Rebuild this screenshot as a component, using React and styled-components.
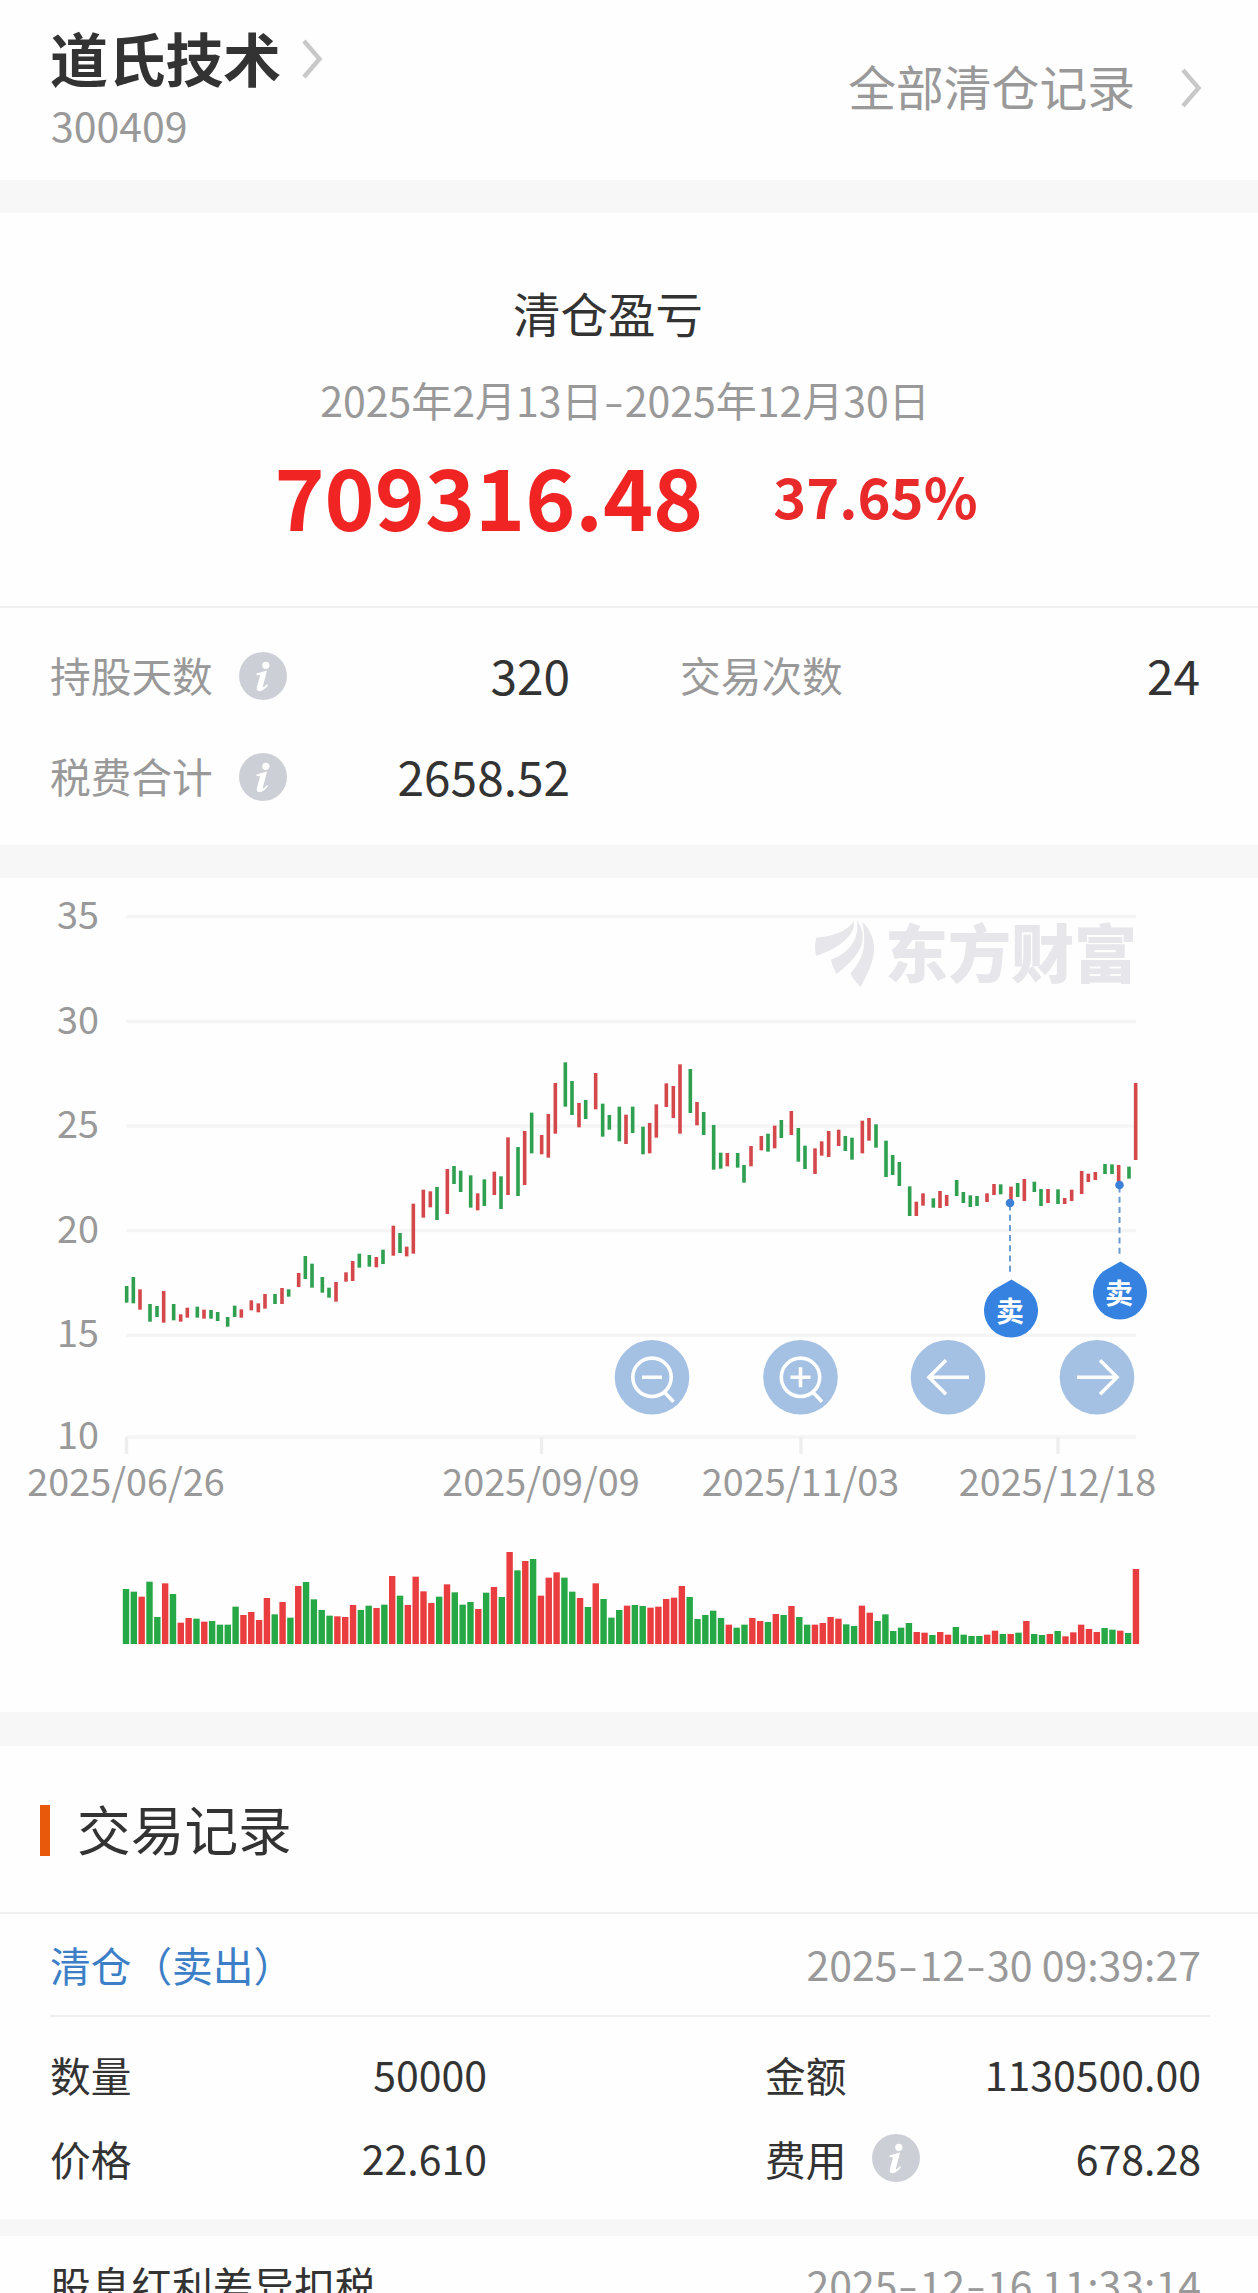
import React from "react";
import styled, { createGlobalStyle } from "styled-components";

const FONT = '"Noto Sans CJK SC", "Noto Sans", sans-serif';

const GlobalStyle = createGlobalStyle`
  * { box-sizing: border-box; }
  body { margin: 0; background: #fefefe; font-family: ${FONT}; }
`;

const Page = styled.main`
  width: 1258px;
  height: 2293px;
  overflow: hidden;
  display: flex;
  flex-direction: column;
  background: #fefefe;
  color: #333;
  font-family: ${FONT};
`;

const Divider = styled.div`
  flex: none;
  height: ${(p) => p.$h}px;
  background: #f7f7f7;
`;

const Header = styled.header`
  flex: none;
  height: 180px;
  padding: 22px 56px 0 50px;
  display: flex;
  justify-content: space-between;
`;

const Stock = styled.div`
  display: flex;
  flex-direction: column;
  gap: 7px;
`;

const StockName = styled.h1`
  margin: 0;
  display: flex;
  align-items: center;
  gap: 21px;
  font-size: 58px;
  line-height: 70px;
  font-weight: 700;
  letter-spacing: -0.3px;
`;

const StockCode = styled.span`
  padding-left: 1px;
  color: #999;
  font-size: 41px;
  line-height: 50px;
`;

const AllRecords = styled.a`
  display: flex;
  align-items: center;
  gap: 46px;
  height: 64px;
  margin-top: 32px;
  color: #999;
  font-size: 47.8px;
  line-height: 64px;
`;

const Summary = styled.section`
  flex: none;
  height: 395px;
  padding-top: 65px;
  display: flex;
  flex-direction: column;
  align-items: center;
  border-bottom: 2px solid #f0f0f0;
`;

const SummaryTitle = styled.h2`
  margin: 0;
  padding-right: 42px;
  font-size: 47.5px;
  line-height: 70px;
  font-weight: 400;
`;

const Period = styled.p`
  margin: 21px 8px 0 0;
  color: #999;
  font-size: 41px;
  line-height: 60px;
`;

const Hyphen = styled.span`
  display: inline-block;
  width: 22px;
  text-align: center;
  transform: scaleX(1.4);
`;

const Result = styled.div`
  display: flex;
  align-items: center;
  gap: 70px;
  margin-top: 13px;
  padding-right: 6px;
  color: #f12424;
  font-weight: 700;
`;

const Amount = styled.span`
  font-size: 85px;
  line-height: 100px;
`;

const Percent = styled.span`
  font-size: 56px;
  line-height: 100px;
  padding-top: 3px;
  color: #e92a2a;
`;

const Stats = styled.section`
  flex: none;
  height: 237px;
  padding: 17px 58px 0 50px;
  display: grid;
  grid-template-columns: 520px 520px;
  grid-auto-rows: 101px;
  column-gap: 110px;
`;

const Field = styled.div`
  display: flex;
  align-items: center;
  gap: 26px;
`;

const FieldName = styled.span`
  font-size: 40.7px;
  line-height: 60px;
  margin-top: ${(p) => (p.$dark ? 1 : -1)}px;
  color: ${(p) => (p.$dark ? "#333" : "#999")};
`;

const FieldValue = styled.span`
  margin: -2px 0 0 auto;
  font-size: ${(p) => p.$size}px;
  line-height: 60px;
`;

const ChartSection = styled.section`
  flex: none;
  height: 834px;
`;

const RecordsTitle = styled.h2`
  flex: none;
  margin: 0;
  height: 168px;
  padding: 2px 0 0 40px;
  display: flex;
  align-items: center;
  gap: 27px;
  border-bottom: 2px solid #f0f0f0;
  font-size: 53.7px;
  font-weight: 400;
  line-height: 70px;

  &::before {
    content: "";
    width: 10px;
    height: 51px;
    background: #e8590c;
  }
`;

const TitleText = styled.span`
  margin-top: -4px;
`;

const RecordHead = styled.div`
  flex: none;
  height: ${(p) => p.$h}px;
  margin: 0 48px 0 50px;
  padding: 0 9px 0 0;
  display: flex;
  align-items: center;
  justify-content: space-between;
  border-bottom: 2px solid #efefef;
  color: ${(p) => p.$color};
  font-size: 40.7px;
  line-height: 60px;
`;

const Time = styled.time`
  margin-top: -4px;
  color: #999;
  font-size: 41px;
`;

const RecordGrid = styled.div`
  flex: none;
  height: 202px;
  padding: 15px 57px 0 50px;
  display: grid;
  grid-template-columns: 437px 436px;
  grid-auto-rows: 84px;
  column-gap: 278px;
`;

const Chevron = () => (
  <svg width="21" height="42" viewBox="0 0 21 42" fill="none" style={{ position: "relative", top: 2 }}>
    <path d="M2 3 17.5 21 2 39" stroke="#c8c8c8" strokeWidth="4.4" />
  </svg>
);

const InfoIcon = () => (
  <svg width="48" height="48" viewBox="0 0 48 48">
    <circle cx="24" cy="24" r="24" fill="#ccd0d6" />
    <circle cx="26.8" cy="13.3" r="3.6" fill="#fff" />
    <path
      d="M17.5 21.6 28 18.4 24 34C23.5 36.2 24.8 35.4 28.2 32L29 33C25.4 39 16.6 42 17.8 35.6L20.8 24.6C21.1 23 20.2 22.8 17.6 23.2Z"
      fill="#fff"
    />
  </svg>
);

/* Hyphens in dates are drawn as wide as a digit. */
const DateText = ({ children }) =>
  children.split("-").map((part, i) => (
    <React.Fragment key={i}>
      {i > 0 && <Hyphen>-</Hyphen>}
      {part}
    </React.Fragment>
  ));

/* Daily ranges as "direction x top bottom", in thirds of a pixel; each run has its own origin. */
const RUNS = [
  {
    x: 110,
    y: 1040,
    days:
      "G50 738 788,G70 711 790,R90 748 809,G120 792 845,G141 798 831,R161 753 848,G191 792 841,R212 823 845,R232 803 833,G262 800 833,R282 809 836,G303 810 836,G323 816 843,G353 831 860,G374 797 831,R394 808 833,R424 781 811,R445 790 817,R465 762 806,G495 762 792,R516 744 792,G536 748 770,R566 699 741,G586 648 717,G606 671 743,G637 711 758,G657 743 773,R678 726 785,R708 697 725,R728 663 723,G748 641 683,G778 645 680,R799 651 682,G819 629 672,R850 557 647,G870 579 639,R890 620 649,R910 491 641,R940 449 533,R961 454 502,G981 441 540",
  },
  {
    x: 440,
    y: 1040,
    days:
      "R22 387 522,G42 378 432,G62 392 456,G92 406 503,R113 460 511,G133 418 498,R163 395 465,G183 409 507,R204 292 465,G234 321 468,R254 273 435,G275 218 340,R305 285 343,R325 222 353,R346 129 281,G376 67 200,G396 123 225,R417 189 262,G437 180 237,R467 99 208,G488 191 290,G508 225 269,G538 200 304,R558 224 312,G578 200 279,G609 260 343,R629 249 340,R649 193 293,R679 130 201,R700 138 234,R720 73 281,G751 87 219,R771 186 256,G791 216 285,G821 255 389,G842 338 386,R862 339 379,G893 339 383,G912 375 428,R933 318 379,R964 288 331,G984 281 335,R1004 257 325,G1024 240 294",
  },
  {
    x: 780,
    y: 1060,
    days:
      "R34 153 225,G55 204 305,G75 257 327,R105 265 342,R125 244 287,R146 213 291,R176 209 258,G196 228 273,G216 233 299,R247 182 280,R267 174 242,G288 193 263,G318 242 351,G338 285 345,G358 306 378,G389 379 468,R409 425 468,R429 400 437,G460 415 443,R480 393 444,R500 405 438,G530 360 408,G550 396 429,G571 406 441,G591 408 438,R621 400 426,R642 372 405,G662 373 403,R693 380 420,G713 369 411,R733 357 423,G763 365 396,G783 387 438,R804 387 429,G834 388 432,R854 414 432,R875 389 423,R905 333 402,R925 341 366,R946 336 360,G975 312 342,G996 313 342,R1016 315 365,G1047 320 356,R1067 69 300",
  },
];

const CANDLES = RUNS.flatMap(({ x, y, days }) =>
  days.split(",").map((d) => {
    const [cx, top, bottom] = d.slice(1).split(" ").map(Number);
    return { up: d[0] === "R", x: x + cx / 3, top: y + top / 3, bottom: y + bottom / 3 };
  })
);

const VOLUMES =
  "G147 G155 R170 G125 G231 R130 G162 R248 R234 G236 R245 G243 G254 G254 G200 R225 R216 R240 R174 G223 R186 G233 R138 G126 G178 G210 G227 R229 R231 R195 G210 G197 R204 G194 R108 G167 R195 R110 R154 R189 G170 R133 G157 G194 G186 R207 G158 R141 G171 R36 G91 R63 G57 R167 R113 R97 G113 G155 R174 G201 R130 G177 G233 G210 R197 G195 G198 R203 R200 R177 R173 R138 G171 G237 G225 G212 G234 R254 G263 G254 R234 R243 G246 R222 G225 R198 G231 G254 R254 R249 R231 R236 G253 G258 R197 R218 G243 G223 G273 G263 G249 R276 R278 G285 R276 R284 G261 G284 G288 G288 R284 R272 G282 R282 G278 R243 G282 G285 R282 G273 R289 R277 R254 R267 R276 G264 G269 R272 G279 R87".split(
    " "
  );

const LEVELS = [
  [35, 916.5],
  [30, 1021.5],
  [25, 1126],
  [20, 1230.5],
  [15, 1335.3],
  [10, 1437],
];

const DATES = [
  ["2025/06/26", 126.5],
  ["2025/09/09", 541.5],
  ["2025/11/03", 801],
  ["2025/12/18", 1058],
];

const SALES = [
  { x: 1010, y: 1203, pinX: 1011, pinY: 1310 },
  { x: 1119.5, y: 1185, pinX: 1120, pinY: 1292 },
];

const AxisText = styled.text`
  font-family: ${FONT};
  font-size: 37.8px;
  fill: #999;
  text-anchor: ${(p) => p.$anchor};
`;

const PinText = styled.text`
  font-family: ${FONT};
  font-size: 28px;
  font-weight: 700;
  fill: #fff;
  text-anchor: middle;
`;

const BrandText = styled.text`
  font-family: ${FONT};
  font-size: 63px;
  font-weight: 900;
  fill: #e6e6eb;
`;

const Control = ({ x, children }) => (
  <g transform={`translate(${x} 1377.3)`}>
    <circle r="37.3" fill="#a4c1e3" />
    <g fill="none" stroke="#fff" strokeWidth="3.6">
      {children}
    </g>
  </g>
);

const Chart = () => (
  <svg width="1258" height="834" viewBox="0 878 1258 834" style={{ display: "block" }}>
    {LEVELS.map(([value, y]) => (
      <g key={value}>
        <line x1="126" x2="1136" y1={y} y2={y} stroke="#f5f5f5" strokeWidth="3.4" />
        <AxisText x="99" y={y + 12} $anchor="end">
          {value}
        </AxisText>
      </g>
    ))}
    {DATES.map(([label, x]) => (
      <g key={label}>
        <line x1={x} x2={x} y1="1437" y2="1454" stroke="#eee" strokeWidth="3.4" />
        <AxisText x={x - 0.5} y="1495.5" $anchor="middle">
          {label}
        </AxisText>
      </g>
    ))}

    <g transform="translate(780 900) scale(.3333)" fill="#e6e6eb">
      <path d="M109 113C150 110 198 98 222 64C226 100 190 140 109 168C104 150 104 130 109 113Z" />
      <path d="M231 61C250 88 254 120 238 150C224 176 192 206 169 222C163 207 156 197 153 179C200 162 240 125 231 61Z" />
      <path d="M247 66C275 90 285 130 282 155C278 195 255 235 241 262C230 245 217 237 212 219C244 182 263 150 247 66Z" />
    </g>
    <BrandText x="885" y="977" textLength="252">
      东方财富
    </BrandText>

    {CANDLES.map((c, i) => (
      <rect
        key={i}
        x={c.x - 1.8}
        y={c.top}
        width="3.6"
        height={c.bottom - c.top}
        fill={c.up ? "#d4474a" : "#2f9f50"}
      />
    ))}

    {SALES.map((s) => (
      <g key={s.x}>
        <line x1={s.x} x2={s.x} y1={s.y + 1.5} y2={s.pinY - 35} stroke="#6b9cd0" strokeWidth="2" strokeDasharray="6 4.2" />
        <circle cx={s.x} cy={s.y} r="4.3" fill="#3d80d8" />
        <path
          transform={`translate(${s.pinX} ${s.pinY})`}
          d="M0.5 -30.5 17 -20.5A27 27 0 1 1 -17 -20.5Z"
          fill="#3682e0"
        />
        <PinText x={s.pinX - 1} y={s.pinY + 12}>
          卖
        </PinText>
      </g>
    ))}

    <Control x={652}>
      <circle r="19.2" />
      <path d="M-10 0H10M12.5 15 21.5 24.5" />
    </Control>
    <Control x={800.5}>
      <circle r="19.2" />
      <path d="M-10 0H10M0 -10V10M12.5 15 21.5 24.5" />
    </Control>
    <Control x={948}>
      <path d="M21 0H-19M-2 -17 -19 0 -2 17" />
    </Control>
    <Control x={1097}>
      <path d="M-20 0H20M3 -17 20 0 3 17" />
    </Control>

    {VOLUMES.map((v, i) => {
      const top = 1540 + Number(v.slice(1)) / 3;
      return (
        <rect
          key={i}
          x={122.8 + i * 7.829}
          y={top}
          width="6.4"
          height={1644 - top}
          fill={v[0] === "R" ? "#ea3d3f" : "#27a846"}
        />
      );
    })}
  </svg>
);

export default function App() {
  return (
    <Page>
      <GlobalStyle />
      <Header>
        <Stock>
          <StockName>
            道氏技术
            <Chevron />
          </StockName>
          <StockCode>300409</StockCode>
        </Stock>
        <AllRecords>
          全部清仓记录
          <Chevron />
        </AllRecords>
      </Header>
      <Divider $h={33} />
      <Summary>
        <SummaryTitle>清仓盈亏</SummaryTitle>
        <Period>
          <DateText>2025年2月13日-2025年12月30日</DateText>
        </Period>
        <Result>
          <Amount>709316.48</Amount>
          <Percent>37.65%</Percent>
        </Result>
      </Summary>
      <Stats>
        <Field>
          <FieldName>持股天数</FieldName>
          <InfoIcon />
          <FieldValue $size={47.8}>320</FieldValue>
        </Field>
        <Field>
          <FieldName>交易次数</FieldName>
          <FieldValue $size={47.8}>24</FieldValue>
        </Field>
        <Field>
          <FieldName>税费合计</FieldName>
          <InfoIcon />
          <FieldValue $size={47.8}>2658.52</FieldValue>
        </Field>
      </Stats>
      <Divider $h={33} />
      <ChartSection>
        <Chart />
      </ChartSection>
      <Divider $h={34} />
      <RecordsTitle>
        <TitleText>交易记录</TitleText>
      </RecordsTitle>
      <RecordHead $h={103} $color="#3d7fc7">
        <span>清仓（卖出）</span>
        <Time>
          <DateText>2025-12-30 09:39:27</DateText>
        </Time>
      </RecordHead>
      <RecordGrid>
        <Field>
          <FieldName $dark>数量</FieldName>
          <FieldValue $size={41}>50000</FieldValue>
        </Field>
        <Field>
          <FieldName $dark>金额</FieldName>
          <FieldValue $size={41}>1130500.00</FieldValue>
        </Field>
        <Field>
          <FieldName $dark>价格</FieldName>
          <FieldValue $size={41}>22.610</FieldValue>
        </Field>
        <Field>
          <FieldName $dark>费用</FieldName>
          <InfoIcon />
          <FieldValue $size={41}>678.28</FieldValue>
        </Field>
      </RecordGrid>
      <Divider $h={17} />
      <RecordHead $h={99} $color="#333">
        <span>股息红利差异扣税</span>
        <Time>
          <DateText>2025-12-16 11:33:14</DateText>
        </Time>
      </RecordHead>
    </Page>
  );
}
